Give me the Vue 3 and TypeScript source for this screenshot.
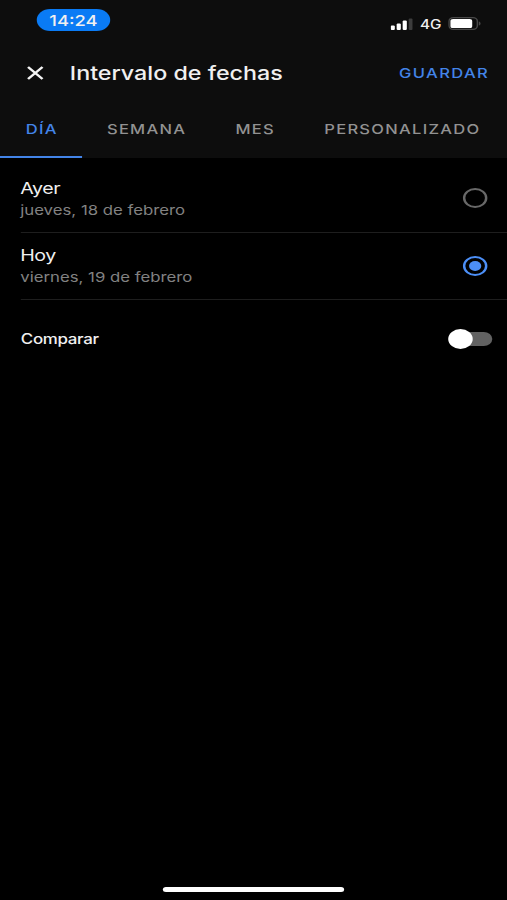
<script setup lang="ts">
import { ref } from 'vue'

interface DayOption {
  id: string
  label: string
  date: string
}

const tabs: string[] = ['Día', 'Semana', 'Mes', 'Personalizado']
const options: DayOption[] = [
  { id: 'ayer', label: 'Ayer', date: 'jueves, 18 de febrero' },
  { id: 'hoy', label: 'Hoy', date: 'viernes, 19 de febrero' },
]

const activeTab = ref<string>('Día')
const selected = ref<string>('hoy')
const compare = ref<boolean>(false)
</script>

<template>
  <div class="screen">
    <header class="top">
      <div class="status">
        <span class="clock">14:24</span>
        <div class="indicators">
          <svg class="signal" width="18" height="12" viewBox="0 0 18 12">
            <rect x="0" y="7.500" width="3.4" height="4.500" rx="1" fill="#fff" />
            <rect x="4.9" y="5.500" width="3.4" height="6.500" rx="1" fill="#fff" />
            <rect x="9.8" y="2.5" width="3.4" height="9.5" rx="1" fill="#fff" />
            <rect x="14.7" y="0.500" width="3.3" height="11.500" rx="1" fill="#3c3c3c" />
          </svg>
          <span class="network">4G</span>
          <svg class="battery" width="27" height="13" viewBox="0 0 27 13">
            <rect x="0.6" y="0.6" width="23.2" height="11.8" rx="3.6" fill="none" stroke="#484848" stroke-width="1.2" />
            <rect x="1.800" y="1.900" width="17.800" height="9.200" rx="2.2" fill="#fff" />
            <path d="M25 4.4c1 .4 1.4 1.2 1.4 2.1s-.4 1.700-1.400 2.100z" fill="#484848" />
          </svg>
        </div>
      </div>
      <div class="bar">
        <button class="close" aria-label="Cerrar">
          <svg width="14" height="14" viewBox="0 0 14 14">
            <path d="M0.900 0.900l11.800 12.200M12.700 0.900L0.900 13.100" stroke="#f4f4f4" stroke-width="2.100" fill="none" />
          </svg>
        </button>
        <h1 class="title">Intervalo de fechas</h1>
        <button class="save">GUARDAR</button>
      </div>
      <nav class="tabs">
        <button
          v-for="tab in tabs"
          :key="tab"
          class="tab"
          :class="{ active: tab === activeTab }"
          @click="activeTab = tab"
        >{{ tab }}</button>
      </nav>
    </header>

    <ul class="options">
      <li v-for="option in options" :key="option.id" class="option" @click="selected = option.id">
        <div class="copy">
          <span class="label">{{ option.label }}</span>
          <span class="date">{{ option.date }}</span>
        </div>
        <span class="radio" :class="{ checked: option.id === selected }"></span>
      </li>
    </ul>

    <div class="compare">
      <span class="compare-label">Comparar</span>
      <button class="switch" :class="{ on: compare }" aria-label="Comparar" @click="compare = !compare">
        <span class="thumb"></span>
      </button>
    </div>

    <div class="home"></div>
  </div>
</template>

<style>
body {
  background: #000;
  overflow: hidden;
}
</style>

<style scoped>
.screen {
  display: flex;
  flex-direction: column;
  box-sizing: border-box;
  width: 414px;
  height: 900px;
  transform: scaleX(1.22464);
  transform-origin: 0 0;
  background: #000;
  color: #f0f0f0;
  font-family: Inter, "Liberation Sans", sans-serif;
}
button {
  border: 0;
  padding: 0;
  background: none;
  color: inherit;
  font: inherit;
}
.top {
  height: 158px;
  background: #0d0d0d;
}
.status {
  display: flex;
  justify-content: space-between;
  height: 48px;
  padding: 9px 21px 0 30px;
  box-sizing: border-box;
}
.clock {
  display: flex;
  align-items: center;
  justify-content: center;
  width: 60px;
  height: 22px;
  border-radius: 11px;
  background: #0a7bf5;
  font-size: 15px;
  font-weight: 500;
}
.indicators {
  display: flex;
  align-items: center;
  height: 29px;
}
.signal {
  margin: 1px 6px 0 0;
}
.network {
  width: 23px;
  padding-top: 1px;
  font-size: 12.500px;
  font-weight: 500;
}
.bar {
  display: flex;
  align-items: center;
  height: 50px;
  padding: 0 15px 0 22px;
}
.close {
  display: flex;
  width: 35px;
}
.title {
  margin: 0;
  padding-top: 2px;
  flex: 1;
  font-size: 19px;
  font-weight: 500;
  line-height: 24px;
}
.save {
  color: #4384e8;
  font-size: 13.500px;
  font-weight: 500;
  letter-spacing: 1.15px;
  margin-right: -0.5px;
}
.tabs {
  display: flex;
  height: 60px;
}
.tab {
  box-sizing: border-box;
  flex-shrink: 0;
  padding: 4px 20.100px 0;
  color: #929292;
  font-size: 13.500px;
  font-weight: 500;
  letter-spacing: 1.04px;
  text-transform: uppercase;
  border-bottom: 2px solid transparent;
}
.tab:first-child {
  padding-left: 21px;
}
.tab.active {
  color: #4384e8;
  border-bottom-color: #4384e8;
}
.options {
  margin: 0;
  padding: 7px 0 0 16.500px;
  list-style: none;
}
.option {
  display: flex;
  align-items: center;
  justify-content: space-between;
  box-sizing: border-box;
  height: 67.500px;
  padding-right: 16px;
  border-bottom: 1px solid #1e1e1e;
}
.copy {
  display: flex;
  flex-direction: column;
  padding-top: 1px;
}
.label {
  font-size: 16px;
  line-height: 22px;
  letter-spacing: -0.35px;
}
.date {
  color: #828282;
  font-size: 13.700px;
  line-height: 22px;
}
.radio {
  display: flex;
  align-items: center;
  justify-content: center;
  box-sizing: border-box;
  width: 20px;
  height: 20px;
  border: 2px solid #686868;
  border-radius: 50%;
}
.radio.checked {
  border-color: #4c8ff7;
}
.radio.checked::after {
  content: "";
  width: 10px;
  height: 10px;
  border-radius: 50%;
  background: #4c8ff7;
}
.compare {
  display: flex;
  align-items: center;
  justify-content: space-between;
  height: 78px;
  padding: 0 12px 0 17px;
}
.compare-label {
  font-size: 13.800px;
  font-weight: 500;
  letter-spacing: -0.25px;
}
.switch {
  position: relative;
  display: flex;
  align-items: center;
  width: 36px;
  height: 20px;
}
.switch::before {
  content: "";
  position: absolute;
  inset: 3px 0 3px 4px;
  border-radius: 7px;
  background: #626262;
}
.thumb {
  position: relative;
  width: 20px;
  height: 20px;
  border-radius: 50%;
  background: #fff;
}
.switch.on .thumb {
  margin-left: 16px;
}
.home {
  width: 148px;
  height: 5px;
  margin: auto auto 8px;
  border-radius: 3px;
  background: #fff;
}
</style>
